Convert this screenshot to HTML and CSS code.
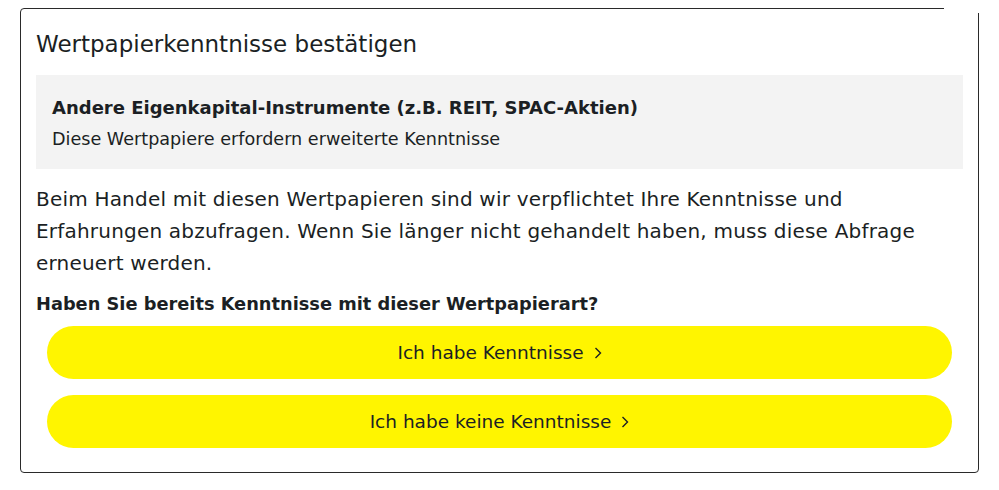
FILE: index.html
```html
<!DOCTYPE html>
<html lang="de">

<head>
    <meta charset="UTF-8">
    <meta name="viewport" content="width=device-width, initial-scale=1.0">
    <title>Wertpapierkenntnisse bestätigen</title>
    <link rel="stylesheet" href="styles.css">
</head>

<body>
    <div class="card">
        <h2 class="title">Wertpapierkenntnisse bestätigen</h2>

        <div class="infoBox">
            <div class="infoTitle">Andere Eigenkapital-Instrumente (z.B. REIT, SPAC-Aktien)</div>
            <div class="infoText">Diese Wertpapiere erfordern erweiterte Kenntnisse</div>
        </div>

        <p class="text">Beim Handel mit diesen Wertpapieren sind wir verpflichtet Ihre Kenntnisse und Erfahrungen abzufragen. Wenn Sie länger nicht gehandelt haben, muss diese Abfrage erneuert werden.</p>

        <div class="question">Haben Sie bereits Kenntnisse mit dieser Wertpapierart?</div>

        <div class="actions">
            <button class="btn">Ich habe Kenntnisse
                <svg class="chev" viewBox="0 0 8 12" width="8" height="12"><path d="M1.5 1 L6.5 6 L1.5 11" fill="none" stroke="#1b1f24" stroke-width="1.4"/></svg>
            </button>
            <button class="btn">Ich habe keine Kenntnisse
                <svg class="chev" viewBox="0 0 8 12" width="8" height="12"><path d="M1.5 1 L6.5 6 L1.5 11" fill="none" stroke="#1b1f24" stroke-width="1.4"/></svg>
            </button>
        </div>
    </div>
</body>

</html>
```

FILE: styles.css
```css
body {
    margin: 0;
    background: #fff;
    font-family: "DejaVu Sans", "Noto Sans", sans-serif;
    color: #1b1f24;
}

.card {
    position: relative;
    box-sizing: border-box;
    width: 959px;
    height: 465px;
    margin: 8px 0 0 20px;
    padding: 0 15px;
    border: 1.5px solid #2a2a2a;
    border-radius: 4px;
}

/* screenshot has the top right corner cut off */
.card::after {
    content: "";
    position: absolute;
    top: -3px;
    right: -3px;
    width: 37px;
    height: 7px;
    background: #fff;
}

.title {
    margin: 0;
    padding-top: 21px;
    height: 45px;
    font-size: 23px;
    font-weight: 400;
    line-height: 28px;
}

.infoBox {
    box-sizing: border-box;
    height: 94px;
    padding: 20px 16px 0;
    background: #f3f3f3;
}

.infoTitle {
    font-size: 18px;
    font-weight: 700;
    line-height: 26px;
}

.infoText {
    margin-top: 7px;
    font-size: 17.6px;
    line-height: 22px;
}

.text {
    margin: 14px 0 0;
    font-size: 20px;
    letter-spacing: 0.2px;
    line-height: 32px;
}

.question {
    margin-top: 12px;
    font-size: 17.8px;
    font-weight: 700;
    line-height: 26px;
}

.actions {
    display: flex;
    flex-direction: column;
    gap: 16px;
    margin: 9px 11px 0;
}

.btn {
    display: flex;
    justify-content: center;
    align-items: center;
    gap: 10px;
    height: 53px;
    border: none;
    border-radius: 27px;
    background: #fff500;
    color: #1b1f24;
    font-family: inherit;
    font-size: 18.5px;
    font-weight: 400;
    cursor: pointer;
}
```
